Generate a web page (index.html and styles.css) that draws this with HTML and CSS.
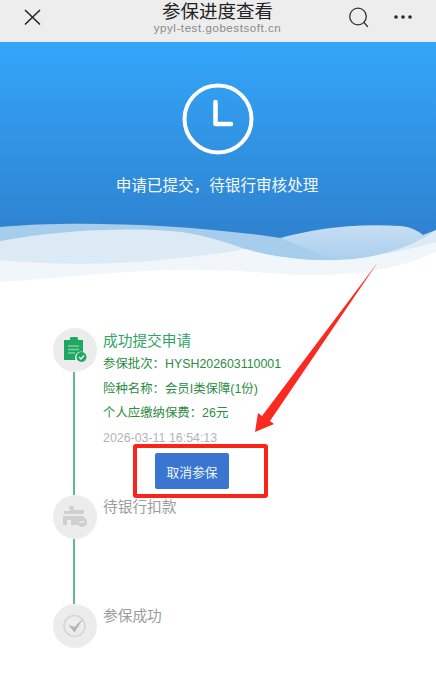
FILE: index.html
```html
<!DOCTYPE html>
<html lang="zh-CN">
<head>
<meta charset="utf-8">
<title>参保进度查看</title>
<link rel="stylesheet" href="styles.css">
</head>
<body>
<div class="page">
  <header class="nav">
    <svg class="nav-close" width="20" height="20" viewBox="0 0 20 20"><path d="M3 3L18 17.500M18 3L3 17.500" fill="none" stroke="#262626" stroke-width="1.600"/></svg>
    <div class="nav-title">
      <div class="nav-name">参保进度查看</div>
      <div class="nav-host">ypyl-test.gobestsoft.cn</div>
    </div>
    <svg class="nav-search" width="22" height="22" viewBox="0 0 22 22"><circle cx="10" cy="10.500" r="8.300" fill="none" stroke="#333" stroke-width="1.300"/><path d="M16 16.500L19.500 20.500" fill="none" stroke="#333" stroke-width="1.300" stroke-linecap="round"/></svg>
    <svg class="nav-more" width="22" height="6" viewBox="0 0 22 6"><circle cx="4" cy="3" r="1.800" fill="#262626"/><circle cx="11" cy="3" r="1.800" fill="#262626"/><circle cx="18" cy="3" r="1.800" fill="#262626"/></svg>
  </header>

  <section class="hero">
    <svg class="hero-clock" width="72" height="72" viewBox="0 0 72 72"><circle cx="36" cy="36" r="33.500" fill="none" stroke="#fff" stroke-width="4"/><path d="M33.500 19V41H49" fill="none" stroke="#fff" stroke-width="4.600" stroke-linecap="round" stroke-linejoin="round"/></svg>
    <div class="hero-text">申请已提交，待银行审核处理</div>
    <svg class="hero-waves" width="436" height="70" viewBox="0 0 436 70">
      <defs><linearGradient id="waveRight" x1="0" y1="0" x2="0" y2="1"><stop offset="0" stop-color="#c6def3"/><stop offset="1" stop-color="#a8ceec"/></linearGradient></defs>
      <path fill="#a6cdec" d="M0 15C70 8 190 12 280 26L436 60V70H0Z"/>
      <path fill="url(#waveRight)" d="M280 26C310 18 350 11 400 14C412 15 418 19 423 23L436 18V50H340Z"/>
      <path fill="#dceaf6" d="M0 29C50 20 110 15 170 19C200 21 225 30 245 37C285 49 335 51 368 45C395 40 420 30 436 18V70H0Z"/>
      <path fill="#f1f6fb" d="M0 48C50 53 110 53 160 48C190 45 220 42 245 37C285 49 335 51 368 45C395 40 420 35 436 30V70H0Z"/>
      <path fill="#fff" d="M0 70C60 66 110 60 167 58C210 57 240 59 267 61C300 64 340 64 370 59C395 55 415 50 436 40V70Z"/>
    </svg>
  </section>

  <main class="timeline">
    <div class="step">
      <div class="rail">
        <div class="badge">
          <svg width="24" height="26" viewBox="0 0 24 26"><path fill="#1fa862" d="M1 3H7V1.500C7 .6 7.600 0 8.500 0H13.500C14.400 0 15 .6 15 1.500V3H20V15A6 6 0 0 0 12.500 23H1Z"/><path d="M5 9H16M5 12.500H16M5 16H12" stroke="#7fcfa4" stroke-width="1.400"/><circle cx="18.500" cy="20" r="5" fill="#1fa862"/><path d="M16 20L18 22L21 18.500" fill="none" stroke="#fff" stroke-width="1.200"/></svg>
        </div>
        <div class="line"></div>
      </div>
      <div class="body">
        <div class="title title-done">成功提交申请</div>
        <div class="row">参保批次：HYSH202603110001</div>
        <div class="row">险种名称：会员I类保障(1份)</div>
        <div class="row">个人应缴纳保费：26元</div>
        <div class="time">2026-03-11 16:54:13</div>
        <button class="cancel">取消参保</button>
      </div>
    </div>
    <div class="step step-wait">
      <div class="rail">
        <div class="badge">
          <svg width="26" height="22" viewBox="0 0 26 22"><path fill="#cfcfcf" d="M7 0H11L12 4H22V8H2V5H8ZM1 10H21V12A6 6 0 0 0 15 19H9V14H5V19H1Z"/><circle cx="20" cy="16" r="5" fill="#cfcfcf"/><path d="M17.500 16H22.500" stroke="#efefef" stroke-width="1.400"/></svg>
        </div>
        <div class="line"></div>
      </div>
      <div class="body"><div class="title title-wait">待银行扣款</div></div>
    </div>
    <div class="step">
      <div class="rail">
        <div class="badge">
          <svg width="24" height="24" viewBox="0 0 24 24"><circle cx="11.500" cy="12" r="10.500" fill="none" stroke="#d6d6d6" stroke-width="1.600"/><path d="M5.500 11L11.500 18.500L20.500 4L11.500 13Z" fill="#b5b5b5"/></svg>
        </div>
      </div>
      <div class="body"><div class="title title-wait">参保成功</div></div>
    </div>
  </main>

  <div class="mark-box"></div>
  <svg class="mark-arrow" width="130" height="176" viewBox="0 0 130 176"><path fill="#fb2a20" d="M126 0L18 159L22 162L3 170L6 151L10 154Z"/></svg>
</div>
</body>
</html>
```
FILE: styles.css
```css
* { box-sizing: border-box; }
html, body { margin: 0; padding: 0; background: #fff; }
body { font-family: "Liberation Sans", "Noto Sans CJK SC", sans-serif; }
.page { position: relative; width: 436px; height: 689px; overflow: hidden; }

.nav { position: relative; display: flex; align-items: center; height: 42px; padding: 0 22px 8px 22px; background: #ededed; }
.nav-close { flex: none; }
.nav-title { position: absolute; left: 0; right: 1px; top: 0; text-align: center; }
.nav-name { height: 23px; font-size: 18.500px; line-height: 24px; color: #222; }
.nav-host { height: 13px; font-size: 11.500px; line-height: 11px; letter-spacing: .57px; color: #8a8a8a; }
.nav-search { flex: none; margin-left: auto; margin-right: 22px; }
.nav-more { flex: none; }

.hero { position: relative; height: 240px; padding-top: 41px; display: flex; flex-direction: column; align-items: center; background: linear-gradient(#33a6fa, #2f82cf 195px); }
.hero-clock { flex: none; margin-left: -1px; }
.hero-text { margin: 19px 2px 0 0; font-size: 15.600px; line-height: 24px; color: #f6fafe; }
.hero-waves { position: absolute; left: 0; bottom: 0; }

.timeline { padding: 46px 0 0 53px; }
.step { display: flex; gap: 6px; }
.step-wait { height: 109px; }
.rail { flex: none; width: 44px; display: flex; flex-direction: column; align-items: center; }
.badge { flex: none; width: 44px; height: 44px; border-radius: 50%; background: #ececec; display: flex; align-items: center; justify-content: center; }
.line { flex: 1; width: 2px; margin-left: -3px; background: #5dbb8e; }
.body { flex: 1; min-width: 0; }
.title { height: 24px; font-size: 14.700px; line-height: 24px; }
.title-done { height: 23px; margin-top: 1px; color: #2da65f; }
.title-wait { color: #9c9c9c; }
.row { height: 24.500px; font-size: 12.400px; line-height: 24.500px; color: #2c8c3f; }
.time { height: 25px; font-size: 12.400px; line-height: 25px; color: #b3b3b3; }
.cancel { display: block; width: 74px; height: 36px; margin: 2.500px 0 6px 52px; padding: 0; border: 0; border-radius: 2px; background: #3a76cf; color: #eef3fb; font-family: inherit; font-size: 12.800px; }

.mark-box { position: absolute; left: 133px; top: 444px; width: 135px; height: 54px; border: 4px solid #fb2418; border-radius: 3px; }
.mark-arrow { position: absolute; left: 252px; top: 262px; }
```
